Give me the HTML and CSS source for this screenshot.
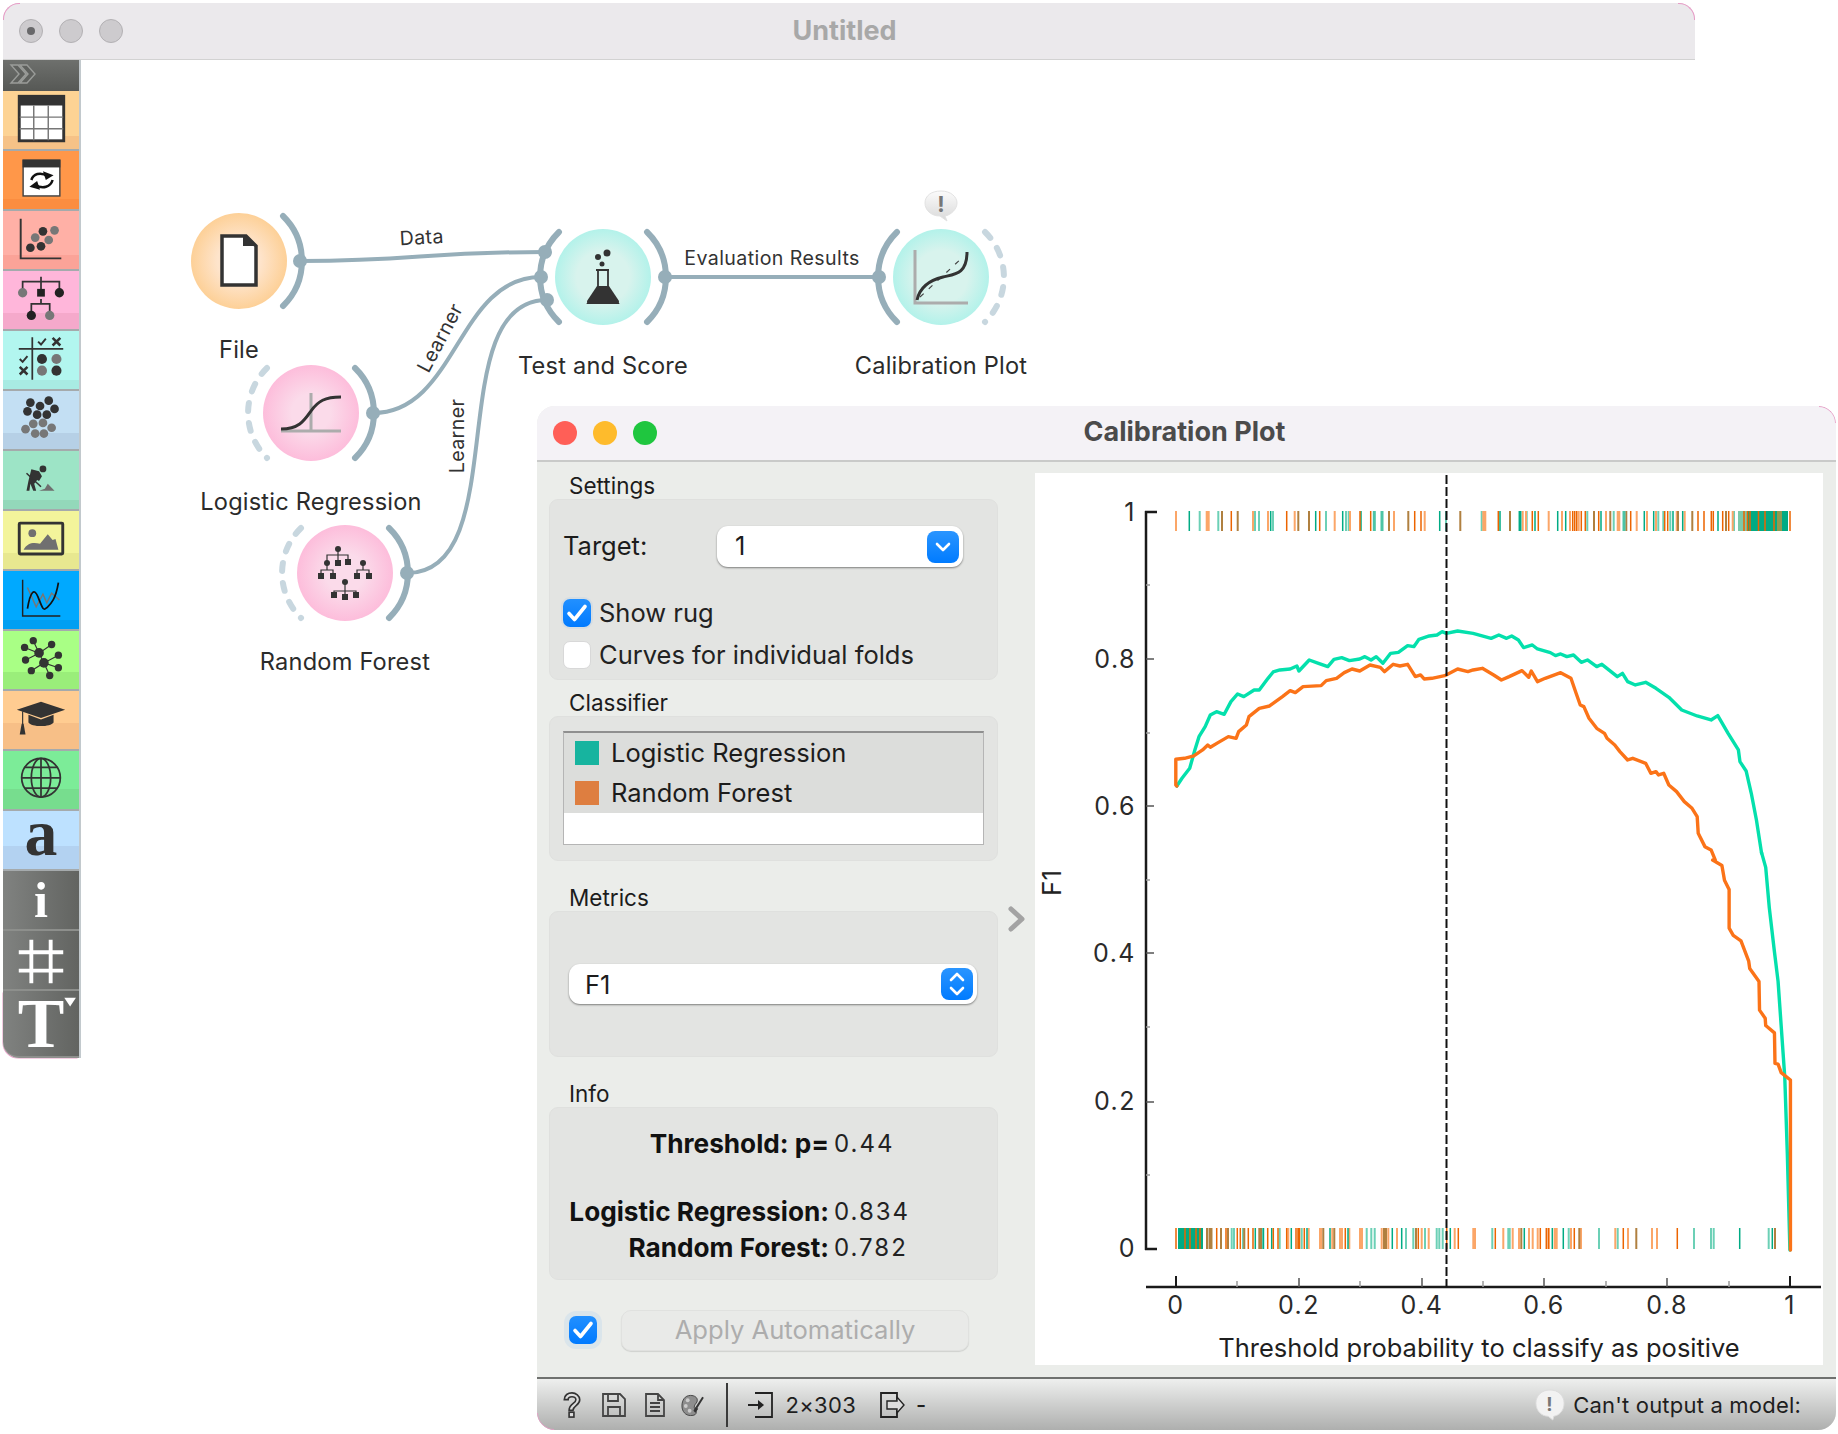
FILE: index.html
```html
<!DOCTYPE html>
<html lang="en">
<head>
<meta charset="utf-8">
<title>Untitled</title>
<link rel="stylesheet" href="styles.css">
</head>
<body>
<div class="desktop">
  <section class="main">
    <header class="main-title">
      <div class="lights">
        <span class="light idle dot"></span><span class="light idle"></span><span class="light idle"></span>
      </div>
      <h1 class="main-name">Untitled</h1>
    </header>
    <div class="main-body">
      <nav class="toolbox">
        <div class="tool-head">
          <svg viewBox="3 0 76 31" class="ico"><path d="M11 5h7l8 9-8 9h-7l8-9zM20 5h7l8 9-8 9h-7l8-9z" fill="#5f615e" stroke="#9a9c99" stroke-width="1.4"/></svg>
        </div>
        <div class="tool c-data"><svg viewBox="3 0 76 60" class="ico">
          <rect x="18.500" y="5.500" width="46" height="46" fill="#fff" stroke="#333" stroke-width="3"/><rect x="18" y="5" width="47" height="10" fill="#333"/>
          <path d="M33.500 15v36M48.500 15v36M19 27h45M19 39h45" stroke="#777" stroke-width="1.500"/></svg></div>
        <div class="tool c-trans"><svg viewBox="3 0 76 60" class="ico">
          <rect x="22.500" y="9.500" width="38" height="37" fill="#fff" stroke="#444" stroke-width="1.500"/><rect x="22" y="9" width="39" height="8" fill="#333"/>
          <path d="M31 30c2-6 9-9 17-4" fill="none" stroke="#111" stroke-width="2.600"/><path d="M43 21l11 4-8 5z" fill="#111"/>
          <path d="M53 30c-2 7-10 10-18 5" fill="none" stroke="#111" stroke-width="2.600"/><path d="M40 40l-11-3 8-6z" fill="#111"/></svg></div>
        <div class="tool c-vis"><svg viewBox="3 0 76 60" class="ico">
          <path d="M20 8v41h42" fill="none" stroke="#333" stroke-width="2"/>
          <g fill="#777"><circle cx="35" cy="27.500" r="4.500"/><circle cx="49" cy="30" r="4.500"/><circle cx="55" cy="20" r="4.500"/></g>
          <g fill="#333"><circle cx="30" cy="38" r="4.500"/><circle cx="41" cy="36.500" r="4.500"/><circle cx="43" cy="21" r="4.500"/></g></svg></div>
        <div class="tool c-model"><svg viewBox="3 0 76 60" class="ico">
          <path d="M41 6v16M22 22v-11h38v11M41 29v5M31 44v-10h19v10" fill="none" stroke="#333" stroke-width="1.800"/>
          <circle cx="22" cy="22.500" r="4.800" fill="#777"/><rect x="37" y="18.500" width="8" height="8" fill="#222"/><circle cx="60" cy="22.500" r="4.800" fill="#222"/>
          <circle cx="31" cy="46" r="4.800" fill="#222"/><circle cx="50" cy="46" r="4.800" fill="#777"/></svg></div>
        <div class="tool c-eval"><svg viewBox="3 0 76 60" class="ico">
          <path d="M32 6.500v44M18 18.500h46" stroke="#333" stroke-width="1.800"/>
          <path d="M38 11l3 3 5-6M19 29l3 3 5-6" fill="none" stroke="#333" stroke-width="2"/>
          <path d="M53 7l8 8M61 7l-8 8M19 37l8 8M27 37l-8 8" stroke="#333" stroke-width="2.600"/>
          <circle cx="42" cy="29" r="5.200" fill="#333"/><circle cx="57" cy="29" r="5.200" fill="#777"/><circle cx="42" cy="41" r="5.200" fill="#777"/><circle cx="57" cy="41" r="5.200" fill="#333"/></svg></div>
        <div class="tool c-unsup"><svg viewBox="3 0 76 60" class="ico">
          <g fill="#333"><circle cx="30" cy="12" r="4.500"/><circle cx="40" cy="15.500" r="4.500"/><circle cx="49" cy="10" r="4.500"/><circle cx="55" cy="18.500" r="4.500"/><circle cx="27" cy="21" r="4.500"/><circle cx="37" cy="24.500" r="4.500"/><circle cx="47" cy="24.500" r="4.500"/></g>
          <g fill="#777"><circle cx="33" cy="34" r="4.500"/><circle cx="43" cy="33" r="4.500"/><circle cx="25" cy="39.500" r="4.500"/><circle cx="52" cy="38" r="4.500"/><circle cx="35" cy="44" r="4.500"/><circle cx="44" cy="44" r="4.500"/></g></svg></div>
        <div class="tool c-pre"><svg viewBox="3 0 76 60" class="ico">
          <circle cx="43" cy="18.500" r="3.500" fill="#333"/>
          <path d="M31 19l8 2 3 5-3 5-2-1-3 4 2 7h-3l-3-7-1 7h-3l2-10z" fill="#333"/>
          <path d="M26 23l15 14" stroke="#333" stroke-width="1.600"/><path d="M39 41l6-2 3-5 7 7z" fill="#6f6f6f"/></svg></div>
        <div class="tool c-img"><svg viewBox="3 0 76 60" class="ico">
          <rect x="18.500" y="12.500" width="45" height="32" rx="1" fill="none" stroke="#333" stroke-width="3"/>
          <circle cx="32" cy="23" r="4" fill="#707070"/><path d="M23 40c4-7 10-8 17-6l8-10 5 6 3-1 3 11z" fill="#707070"/></svg></div>
        <div class="tool c-line"><svg viewBox="3 0 76 60" class="ico">
          <path d="M22 9v37.500h39" fill="none" stroke="#222" stroke-width="1.500"/>
          <path d="M27 17l9 20 7-13 4 9 5-10 8 7" fill="none" stroke="#777" stroke-width="1.500"/>
          <path d="M27 39c3-18 7-22 11-12s5 15 9 11 9-8 12-26" fill="none" stroke="#111" stroke-width="1.800"/></svg></div>
        <div class="tool c-net"><svg viewBox="3 0 76 60" class="ico">
          <path d="M33 10l6 13 13-9M24 17l15 6M25 30l14-7 5 10 15-8M44 33l15 5M31 41l13-8 6 13" fill="none" stroke="#333" stroke-width="1.200"/>
          <g fill="#333"><circle cx="39" cy="22.700" r="5"/><circle cx="44" cy="33" r="5"/><circle cx="33" cy="10" r="3.800"/><circle cx="52" cy="14" r="3.800"/><circle cx="24" cy="17" r="3.800"/><circle cx="59" cy="25" r="3.800"/><circle cx="25" cy="30" r="3.800"/><circle cx="59" cy="38" r="3.800"/><circle cx="31" cy="41" r="3.800"/><circle cx="50" cy="46" r="3.800"/></g></svg></div>
        <div class="tool c-edu"><svg viewBox="3 0 76 60" class="ico">
          <path d="M16 19.500l25-8.500 25 8.500-25 8.500z" fill="#333"/><path d="M28 24.500l13 5 13-5v8c-3 5-23 5-26 0z" fill="#333"/>
          <path d="M22 21v14" stroke="#333" stroke-width="1.200"/><path d="M21 34h2l2 11h-6z" fill="#333"/></svg></div>
        <div class="tool c-web"><svg viewBox="3 0 76 60" class="ico">
          <g fill="none" stroke="#333" stroke-width="1.800"><circle cx="41" cy="27.700" r="20"/><ellipse cx="41" cy="27.700" rx="10" ry="20"/><path d="M41 7.700v40M21 27.700h40M24 17h34M24 38.500h34"/></g></svg></div>
        <div class="tool c-txt"><svg viewBox="3 0 76 60" class="ico"><text x="41" y="45" class="glyph-a">a</text></svg></div>
        <div class="tool c-misc"><svg viewBox="3 0 76 60" class="ico"><text x="41" y="48" class="glyph-i">i</text></svg></div>
        <div class="tool c-misc"><svg viewBox="3 0 76 60" class="ico"><path d="M18 22h46M18 41h46M31 9v45M51 9v45" stroke="#fff" stroke-width="4"/></svg></div>
        <div class="tool c-misc last"><svg viewBox="3 0 76 67" class="ico"><text x="41" y="58" class="glyph-t">T</text><path d="M65 7h12l-6 9z" fill="#fff"/></svg></div>
      </nav>
      <div class="canvas">
        <svg class="scheme" viewBox="81 60 1614 998">
          <g class="wire">
            <path d="M300 261C420 261 420 252 545 252"/>
            <path d="M373 413C457 413 457 277 541 277"/>
            <path d="M407 573C515 573 440 300 547 300"/>
            <path d="M665 277H879"/>
          </g>
          <text class="link-label" transform="translate(422 244) rotate(-3)">Data</text>
          <text class="link-label" transform="translate(772 265)">Evaluation Results</text>
          <text class="link-label" transform="translate(446 341) rotate(-62)">Learner</text>
          <text class="link-label" transform="translate(464 436) rotate(-90)">Learner</text>

          <defs>
            <radialGradient id="gOrange"><stop offset="0.45" stop-color="#fee4cb"/><stop offset="1" stop-color="#fdd097"/></radialGradient>
            <radialGradient id="gPink"><stop offset="0.4" stop-color="#fbdbea"/><stop offset="1" stop-color="#fdbddb"/></radialGradient>
            <radialGradient id="gTeal"><stop offset="0.55" stop-color="#d8f3ed"/><stop offset="1" stop-color="#b3f2ea"/></radialGradient>
            <linearGradient id="gBubble" x1="0" y1="0" x2="0" y2="1"><stop offset="0" stop-color="#fbfbfb"/><stop offset="1" stop-color="#d9d9d9"/></linearGradient>
          </defs>

          <!-- File -->
          <circle cx="239" cy="261" r="48" fill="url(#gOrange)"/>
          <path class="port" d="M283 216A63 63 0 0 1 283 306"/><circle class="anchor" cx="300" cy="261" r="7"/>
          <path d="M222 236h24l10 10v39h-34z" fill="#fff" stroke="#333" stroke-width="3.500"/><path d="M243 235l14 11h-14z" fill="#333"/>
          <text class="node-label" x="239" y="358">File</text>

          <!-- Logistic Regression -->
          <circle cx="311" cy="413" r="48" fill="url(#gPink)"/>
          <path class="port" d="M355 368A63 63 0 0 1 355 458"/><circle class="anchor" cx="373" cy="413" r="7"/>
          <path class="port-off" d="M267 368A63 63 0 0 0 267 458"/>
          <path d="M311 393v38M281 431h60" stroke="#acacac" stroke-width="3" fill="none"/>
          <path d="M281 429c18 0 23-8 30-18s14-14 30-14" fill="none" stroke="#333" stroke-width="3"/>
          <text class="node-label" x="311" y="510">Logistic Regression</text>

          <!-- Random Forest -->
          <circle cx="345" cy="573" r="48" fill="url(#gPink)"/>
          <path class="port" d="M389 528A63 63 0 0 1 389 618"/><circle class="anchor" cx="407" cy="573" r="7"/>
          <path class="port-off" d="M301 528A63 63 0 0 0 301 618"/>
          <g class="rf-lines"><path d="M338 549v6M327 563v-8h21v7M338 555v8M327 563v7M321 576v-6h12v6M363 563v7M357 576v-6h12v6M345 582v9M334 595v-4h22v4M345 591v6"/></g>
          <g class="rf-nodes"><circle cx="338" cy="549" r="3"/><circle cx="327" cy="563" r="3"/><rect x="335" y="560" width="6" height="6"/><rect x="345" y="559" width="6" height="6"/><rect x="318" y="573" width="6" height="6"/><rect x="330" y="573" width="6" height="6"/><circle cx="363" cy="563" r="3"/><rect x="354" y="573" width="6" height="6"/><rect x="366" y="573" width="6" height="6"/><circle cx="345" cy="582" r="3"/><rect x="331" y="592" width="6" height="6"/><rect x="342" y="594" width="6" height="6"/><rect x="353" y="592" width="6" height="6"/></g>
          <text class="node-label" x="345" y="670">Random Forest</text>

          <!-- Test and Score -->
          <circle cx="603" cy="277" r="48" fill="url(#gTeal)"/>
          <path class="port" d="M559 232A63 63 0 0 0 559 322"/><path class="port" d="M647 232A63 63 0 0 1 647 322"/>
          <circle class="anchor" cx="545" cy="252" r="7"/><circle class="anchor" cx="541" cy="277" r="7"/><circle class="anchor" cx="547" cy="300" r="7"/><circle class="anchor" cx="665" cy="277" r="7"/>
          <circle cx="607" cy="253" r="3.500" fill="#333"/><circle cx="598" cy="257" r="3" fill="#333"/><circle cx="602" cy="264" r="2.500" fill="#333"/>
          <path d="M596 270h13M598 270v18l-10 15h30l-10-15v-18" fill="none" stroke="#333" stroke-width="1.800"/>
          <path d="M597 286h12l10 15c0 2-1 3-3 3h-26c-2 0-3-1-3-3z" fill="#333"/>
          <text class="node-label" x="603" y="374">Test and Score</text>

          <!-- Calibration Plot -->
          <circle cx="941" cy="277" r="48" fill="url(#gTeal)"/>
          <path class="port" d="M897 232A63 63 0 0 0 897 322"/><circle class="anchor" cx="879" cy="277" r="7"/>
          <path class="port-off" d="M985 232A63 63 0 0 1 985 322"/>
          <path d="M915 250v53h53" fill="none" stroke="#acacac" stroke-width="3"/>
          <path d="M920 297l43-40" fill="none" stroke="#444" stroke-width="1.200" stroke-dasharray="5 7"/>
          <path d="M917 300c2-9 9-19 26-23 12-3 24-3 24-25" fill="none" stroke="#333" stroke-width="3"/>
          <text class="node-label" x="941" y="374">Calibration Plot</text>
          <path d="M941 191c10 0 16 6 16 12s-6 12-12 13l2 5-7-5c-9 0-15-6-15-13s6-12 16-12z" fill="url(#gBubble)" stroke="#e2e2e2" stroke-width="1"/>
          <text class="bubble-mark" x="941" y="212">!</text>
        </svg>
      </div>
    </div>
  </section>

  <section class="win">
    <header class="win-title">
      <div class="lights">
        <span class="light red"></span><span class="light amber"></span><span class="light green"></span>
      </div>
      <h2 class="win-name">Calibration Plot</h2>
    </header>
    <div class="win-body">
      <aside class="side">
        <div class="group">
          <div class="group-label">Settings</div>
          <div class="box box-settings">
            <div class="target-row">
              <span class="target-label">Target:</span>
              <div class="combo combo-target"><span class="combo-value val-one">1</span>
                <span class="combo-btn"><svg viewBox="0 0 32 32" class="ico"><path d="M10 13l6 6 6-6" fill="none" stroke="#fff" stroke-width="2.600" stroke-linecap="round" stroke-linejoin="round"/></svg></span></div>
            </div>
            <label class="check-row first"><span class="check on"><svg viewBox="0 0 28 28" class="ico"><path d="M6 14.500l5.500 6L22 7.500" fill="none" stroke="#fff" stroke-width="3.600" stroke-linecap="round" stroke-linejoin="round"/></svg></span>Show rug</label>
            <label class="check-row"><span class="check"></span>Curves for individual folds</label>
          </div>
        </div>
        <div class="group g-class">
          <div class="group-label">Classifier</div>
          <div class="box box-class">
            <div class="list">
              <div class="list-item"><span class="swatch teal"></span><span class="item-text">Logistic Regression</span></div>
              <div class="list-item"><span class="swatch orange"></span><span class="item-text">Random Forest</span></div>
            </div>
          </div>
        </div>
        <div class="group g-next">
          <div class="group-label">Metrics</div>
          <div class="box box-metrics">
            <div class="combo combo-metric"><span class="combo-value">F1</span>
              <span class="combo-btn"><svg viewBox="0 0 32 32" class="ico"><path d="M10 12l6-6 6 6M10 20l6 6 6-6" fill="none" stroke="#fff" stroke-width="2.600" stroke-linecap="round" stroke-linejoin="round"/></svg></span></div>
          </div>
        </div>
        <div class="group g-next">
          <div class="group-label">Info</div>
          <div class="box box-info">
            <div class="info-grid">
              <b class="k">Threshold: p=</b><span class="v">0.44</span>
              <span class="info-gap"></span>
              <b class="k">Logistic Regression:</b><span class="v">0.834</span>
              <b class="k">Random Forest:</b><span class="v">0.782</span>
            </div>
          </div>
        </div>
        <div class="apply-row">
          <span class="check on halo"><svg viewBox="0 0 28 28" class="ico"><path d="M6 14.500l5.500 6L22 7.500" fill="none" stroke="#fff" stroke-width="3.600" stroke-linecap="round" stroke-linejoin="round"/></svg></span>
          <button class="apply" disabled>Apply Automatically</button>
        </div>
      </aside>
      <div class="split"><svg viewBox="0 0 18 26" class="chev"><path d="M3 3l11 10L3 23" fill="none" stroke="#a3a3a3" stroke-width="5" stroke-linejoin="round" stroke-linecap="round"/></svg></div>
      <div class="plot">
        <svg class="plot-svg" viewBox="1035 473 788 892">
          <!-- rugs -->
          <g class="rug r-tl"><path d="M1199.700 511v20M1218.300 511v20M1255 511v20M1259 511v20M1273 511v20M1326 511v20M1346 511v20M1348.700 511v20M1446 511v20M1481.700 511v20M1526.700 511v20M1587.300 511v20M1613.700 511v20M1658.300 511v20M1663.300 511v20M1670.300 511v20M1734 511v20"/></g>
          <g class="rug r-ol"><path d="M1176 511v20M1206.700 511v20M1208.700 511v20M1253 511v20M1268 511v20M1294.700 511v20M1334.700 511v20M1350 511v20M1394 511v20M1424.700 511v20M1483.300 511v20M1485.300 511v20M1522.700 511v20M1526 511v20M1548.700 511v20M1562 511v20M1570 511v20M1578.700 511v20M1606 511v20M1617.700 511v20M1619.300 511v20M1636.700 511v20M1647 511v20M1656 511v20M1676.700 511v20M1684.700 511v20M1732.700 511v20"/></g>
          <g class="rug r-t"><path d="M1189.300 511v20M1270.700 511v20M1315.700 511v20M1342.700 511v20M1361 511v20M1439.700 511v20M1500 511v20M1519.300 511v20M1520.700 511v20M1535 511v20M1557.700 511v20M1565.700 511v20M1601 511v20M1644.300 511v20M1653.700 511v20M1673 511v20M1682.700 511v20M1718 511v20"/></g>
          <g class="rug r-o"><path d="M1231.300 511v20M1286.700 511v20M1319.700 511v20M1360 511v20M1370.700 511v20M1414.700 511v20M1421 511v20M1498.300 511v20M1532.300 511v20M1538.300 511v20M1572.700 511v20M1574.700 511v20M1576.700 511v20M1581.300 511v20M1585.300 511v20M1598.700 511v20M1630.700 511v20M1664.700 511v20M1667.700 511v20M1698 511v20M1704 511v20M1711.300 511v20M1713.300 511v20M1722.700 511v20M1728.700 511v20"/></g>
          <g class="rug r-b"><path d="M1222 511v20M1237.700 511v20M1298.300 511v20M1309 511v20M1389 511v20M1408.300 511v20M1460.300 511v20M1510 511v20M1594 511v20M1610.300 511v20M1626.300 511v20M1678 511v20M1692.300 511v20M1726 511v20"/></g>
          <g class="rug r-wide-tl"><path d="M1374.300 511v20M1382 511v20M1624 511v20"/></g>
          <path class="rug-block b-tl" d="M1738 521h14"/><path class="rug-block b-t" d="M1747 521h41"/>
          <path class="rug-block b-br" d="M1777 521h5"/>
          <g class="rug r-o"><path d="M1744 511v20M1747.500 511v20M1750 511v20M1758.500 511v20M1765 511v20M1774 511v20M1790 511v20"/></g>

          <g class="rug r-tl"><path d="M1231.700 1228v21M1234 1228v21M1243 1228v21M1263.300 1228v21M1279.700 1228v21M1301.700 1228v21M1366.700 1228v21M1371.300 1228v21M1374.700 1228v21M1406 1228v21M1413.300 1228v21M1425 1228v21M1436.700 1228v21M1439.300 1228v21M1442.700 1228v21M1492.300 1228v21M1508.300 1228v21M1509.700 1228v21M1568.700 1228v21M1599 1228v21M1617.700 1228v21M1694 1228v21M1711 1228v21M1713.700 1228v21M1768.700 1228v21"/></g>
          <g class="rug r-ol"><path d="M1288.300 1228v21M1308.700 1228v21M1320 1228v21M1321.300 1228v21M1332.300 1228v21M1340 1228v21M1342 1228v21M1349.300 1228v21M1360 1228v21M1362 1228v21M1381.700 1228v21M1388.300 1228v21M1397 1228v21M1421.700 1228v21M1428.700 1228v21M1454.700 1228v21M1473.300 1228v21M1475 1228v21M1503.300 1228v21M1512.700 1228v21M1519 1228v21M1529 1228v21M1532.700 1228v21M1537.700 1228v21M1549 1228v21M1554.700 1228v21M1556.700 1228v21M1571 1228v21M1581 1228v21M1615.300 1228v21M1628 1228v21M1652 1228v21M1657 1228v21"/></g>
          <g class="rug r-t"><path d="M1255.300 1228v21M1263.300 1228v21M1271.700 1228v21M1291.300 1228v21M1307 1228v21M1330 1228v21M1348 1228v21M1392.300 1228v21M1401.700 1228v21M1450.300 1228v21M1524.300 1228v21M1552.300 1228v21M1563.300 1228v21M1739.700 1228v21M1772.300 1228v21"/></g>
          <g class="rug r-o"><path d="M1216.700 1228v21M1226 1228v21M1237.300 1228v21M1240.300 1228v21M1248.300 1228v21M1253 1228v21M1267.700 1228v21M1273.300 1228v21M1278 1228v21M1286.700 1228v21M1296 1228v21M1298 1228v21M1299.500 1228v21M1304.300 1228v21M1345.300 1228v21M1418.300 1228v21M1446.700 1228v21M1458.300 1228v21M1495.300 1228v21M1540.300 1228v21M1546.300 1228v21M1548.300 1228v21M1574.300 1228v21M1623.300 1228v21M1677.300 1228v21"/></g>
          <g class="rug r-b"><path d="M1207 1228v21M1209.500 1228v21M1211.500 1228v21M1221 1228v21M1228 1228v21M1244.300 1228v21M1259.300 1228v21M1261 1228v21M1323.300 1228v21M1334.300 1228v21M1384 1228v21M1386 1228v21M1416 1228v21M1521.300 1228v21M1579.300 1228v21M1636.300 1228v21M1775 1228v21"/></g>
          <path class="rug-block b-t b-low" d="M1178 1238.500h25"/>
          <g class="rug r-o"><path d="M1176 1228v21M1185 1228v21M1190 1228v21M1196 1228v21M1200 1228v21"/></g>

          <!-- axes -->
          <path class="axis" d="M1146 511v739M1145 512h12M1145 1249h12M1146 1287h675"/>
          <path class="tick" d="M1146 659h8M1146 806h8M1146 953h8M1146 1102h8"/>
          <path class="tick-minor" d="M1146 585h4M1146 733h4M1146 880h4M1146 1027h4M1146 1175h4"/>
          <path class="axis-x-major" d="M1176 1287v-11M1790 1287v-11"/>
          <path class="tick" d="M1299 1287v-9M1422 1287v-9M1544 1287v-9M1667 1287v-9"/>
          <path class="tick-minor" d="M1237 1287v-6M1360 1287v-6M1483 1287v-6M1606 1287v-6M1729 1287v-6"/>
          <text class="ty" x="1136" y="521">1</text>
          <text class="ty" x="1136" y="668">0.8</text>
          <text class="ty" x="1136" y="815">0.6</text>
          <text class="ty" x="1136" y="962">0.4</text>
          <text class="ty" x="1136" y="1110">0.2</text>
          <text class="ty" x="1136" y="1257">0</text>
          <text class="tx" x="1176" y="1314">0</text>
          <text class="tx" x="1299" y="1314">0.2</text>
          <text class="tx" x="1422" y="1314">0.4</text>
          <text class="tx" x="1544" y="1314">0.6</text>
          <text class="tx" x="1667" y="1314">0.8</text>
          <text class="tx" x="1790" y="1314">1</text>
          <text class="x-title" x="1479" y="1357">Threshold probability to classify as positive</text>
          <text class="y-title" transform="translate(1061 883) rotate(-90)">F1</text>

          <!-- curves -->
          <g transform="translate(1030 470) scale(.5152 .3333)">
            <polyline class="curve c-teal" points="285,948 295,925 310,895 320,840 328,800 340,770 350,735 362,725 377,733 390,695 403,672 415,680 435,660 445,660 462,625 472,606 485,600 505,597 518,588 522,603 542,570 560,580 578,590 590,568 605,563 620,572 640,567 650,560 662,570 672,560 685,580 700,550 715,547 733,527 745,530 755,508 775,498 790,495 800,485 808,490 830,483 860,490 895,505 910,495 925,505 935,498 948,510 958,533 975,525 985,537 1010,548 1020,557 1030,552 1042,560 1055,555 1070,577 1082,570 1100,590 1110,583 1140,620 1150,610 1160,635 1175,645 1195,637 1215,655 1240,682 1265,720 1285,732 1295,738 1322,750 1335,737 1355,790 1375,840 1378,875 1390,903 1400,970 1410,1050 1420,1150"/>
          </g>
          <g transform="translate(1030 860) scale(.5152 .3679)">
            <polyline class="curve c-teal" points="1420,-20 1428,20 1435,130 1445,250 1452,330 1458,450 1465,590 1470,800 1475,1060"/>
          </g>
          <g transform="translate(1030 470) scale(.5152 .3333)">
            <polyline class="curve c-orange" points="285,948 283,945 283,868 300,865 318,858 335,840 345,825 350,832 365,818 385,800 400,805 405,785 420,765 425,740 445,715 465,708 490,680 505,662 515,668 530,650 565,647 575,632 595,625 610,608 625,597 640,603 660,585 680,592 688,605 705,583 718,588 733,583 748,620 758,615 765,627 780,625 805,617 830,597 850,605 860,600 878,595 900,615 915,630 930,620 955,602 968,622 973,603 985,635 1000,625 1030,608 1050,625 1060,670 1068,705 1075,710 1085,745 1100,775 1115,790 1120,805 1135,825 1145,845 1160,870 1170,865 1195,880 1205,910 1215,905 1220,915 1230,910 1240,945 1255,965 1270,995 1285,1015 1295,1040 1297,1090 1310,1130 1322,1140 1330,1170"/>
          </g>
          <g transform="translate(1030 860) scale(.5152 .3679)">
            <polyline class="curve c-orange" points="1325,0 1343,15 1348,55 1357,80 1357,185 1365,205 1380,220 1395,275 1397,295 1415,330 1416,408 1427,430 1428,450 1445,470 1446,553 1452,555 1458,578 1476,598 1476,1060"/>
          </g>
          <path class="threshold" d="M1446.500 475V1287"/>
        </svg>
      </div>
    </div>
    <footer class="status">
      <div class="status-left">
        <svg viewBox="3 1 20 29" class="st st-help"><path d="M5 10c0-5 4-7 8-7s8 3 8 7c0 6-7 6-7 11h-4c0-7 7-7 7-11 0-2-2-3-4-3s-4 1-4 3z" fill="#ddd" stroke="#333" stroke-width="1.700"/><rect x="10" y="23" width="5" height="5" fill="#ddd" stroke="#333" stroke-width="1.700"/></svg>
        <svg viewBox="0 0 26 26" class="st st-save"><path d="M2 2h17l5 5v17H2zM7 2v7h10V2M7 24V15h12v9" fill="none" stroke="#444" stroke-width="1.800"/></svg>
        <svg viewBox="0 0 22 26" class="st st-doc"><path d="M2 2h12l6 6v16H2zM14 2v6h6M6 11h10M6 15h10M6 19h10" fill="none" stroke="#444" stroke-width="1.800"/></svg>
        <svg viewBox="0 0 24 24" class="st st-pal"><path d="M10 2C4 2 1 7 1 13s4 10 9 10c4 0 6-1 6-4s-3-3-2-6 3-3 3-6-3-5-7-5z" fill="#8e8e8e" stroke="#444" stroke-width="1"/><circle cx="7" cy="7" r="2" fill="#ccc"/><circle cx="5" cy="13" r="2" fill="#ccc"/><circle cx="9" cy="18" r="2" fill="#ccc"/><path d="M23 4l-7 11" stroke="#333" stroke-width="2"/><path d="M15 14l3 2-3 4-2-2z" fill="#333"/></svg>
        <span class="st-sep"></span>
        <svg viewBox="0 0 26 28" class="st st-in"><path d="M8 2h17v24H8M1 14h14" fill="none" stroke="#222" stroke-width="1.800"/><path d="M11 9l6 5-6 5z" fill="#222"/></svg>
        <span class="st-text st-count">2×303</span>
        <svg viewBox="0 0 27 28" class="st st-out"><path d="M18 9V2H2v24h16v-7" fill="none" stroke="#222" stroke-width="1.800"/><path d="M8 10h10V6l7 8-7 8v-4H8z" fill="#ddd" stroke="#222" stroke-width="1.400"/></svg>
        <span class="st-text st-dash">-</span>
      </div>
      <div class="status-right">
        <svg viewBox="0 0 32 34" class="st-warn"><path d="M16 1c9 0 15 6 15 14s-5 13-11 14l-1 4-5-4C7 29 1 23 1 15S7 1 16 1z" fill="#f2f2f2" stroke="#dcdcdc"/><text class="warn-mark" x="15.500" y="23">!</text></svg>
        <span class="st-text">Can't output a model:</span>
      </div>
    </footer>
  </section>
</div>
</body>
</html>
```
FILE: styles.css
```css
* { box-sizing: border-box; }
html, body { margin: 0; padding: 0; background: #fff; }
body { font-family: Inter, "Liberation Sans", sans-serif; color: #1c1c1c; }
.desktop { position: relative; width: 1838px; height: 1434px; padding: 3px 0 0 3px; overflow: hidden; }
.ico { display: block; width: 100%; height: 100%; overflow: visible; }

/* main window */
.main { width: 1692px; }
.main-title { position: relative; height: 57px; display: grid; grid-template-columns: 1fr auto 1fr; align-items: center; background: #ebe9ec; border-bottom: 1px solid #d2d2d2; border-radius: 16px 16px 0 0; padding: 0 25px 1px 16px; }
.main-title::before, .main-title::after, .win::before, .win::after { content: ""; position: absolute; width: 16px; height: 16px; pointer-events: none; }
.main-title::before { left: 0; top: 0; border-top: 1px solid #e79cc6; border-left: 1px solid #e79cc6; border-top-left-radius: 16px; }
.main-title::after { right: 0; top: 0; border-top: 1px solid #e79cc6; border-right: 1px solid #e79cc6; border-top-right-radius: 16px; }
.main-name { margin: 0; font-size: 27px; font-weight: 700; color: #a8a8a8; }
.lights { display: flex; gap: 16px; }
.light { width: 24px; height: 24px; border-radius: 50%; display: flex; align-items: center; justify-content: center; }
.idle { background: #cdcbce; border: 1px solid #b3b1b4; }
.dot::after { content: ""; width: 8px; height: 8px; border-radius: 50%; background: #68686a; }
.red { background: #ff5f57; }
.amber { background: #febb2c; }
.green { background: #1fc63f; }

.main-body { display: flex; height: 998px; }
.toolbox { width: 78px; border-right: 2px solid #c2c9cd; flex: none; }
.tool-head { height: 31px; background: linear-gradient(#6e706d, #565855); }
.tool { height: 60px; border-bottom: 2px solid #a5aaac; }
.tool.last { height: 67px; border-bottom: 2px solid #8d8f8c; border-bottom-left-radius: 16px; box-shadow: -1px 1px 0 -0.5px #e79cc6; }
.c-data { background: linear-gradient(#fdd394 78%, #f6c287 78%); }
.c-trans { background: linear-gradient(#ff9749 82%, #fb8d40 82%); }
.c-vis { background: linear-gradient(#ffb0a6 75%, #fba398 75%); }
.c-model { background: linear-gradient(#ffb6da 72%, #f5a9cb 72%); }
.c-eval { background: linear-gradient(#b2f6ef 85%, #a8ebe3 85%); }
.c-unsup { background: linear-gradient(#c3dff3 72%, #b6d0e6 72%); }
.c-pre { background: linear-gradient(#9de4c6 85%, #93d8ba 85%); }
.c-img { background: linear-gradient(#f3f49b 72%, #e8e890 72%); }
.c-line { background: linear-gradient(#00a9ff 85%, #009ff2 85%); }
.c-net { background: linear-gradient(#a9ff85 70%, #9aee7a 70%); }
.c-edu { background: linear-gradient(#ffcc91 55%, #f7bf87 55%); }
.c-web { background: linear-gradient(#7cec98 65%, #77dd8e 65%); }
.c-txt { background: linear-gradient(#bde1ff 60%, #b3d2f1 60%); }
.c-misc { background: linear-gradient(90deg, #808280, #626461); border-bottom-color: #8d8f8c; }
.glyph-a { font-family: "Liberation Serif", serif; font-weight: 700; font-size: 68px; fill: #333; text-anchor: middle; }
.glyph-i { font-family: "Liberation Serif", serif; font-weight: 700; font-size: 52px; fill: #fff; text-anchor: middle; }
.glyph-t { font-family: "Liberation Serif", serif; font-weight: 700; font-size: 72px; line-height: 1; fill: #fff; text-anchor: middle; }

.canvas { position: relative; flex: 1; }
.scheme { position: absolute; top: 0; left: 0; width: 1614px; height: 998px; overflow: visible; }
.wire path { fill: none; stroke: #96aeb9; stroke-width: 4; }
.port { fill: none; stroke: #96aeb9; stroke-width: 6; stroke-linecap: round; }
.port-off { fill: none; stroke: #c8d7df; stroke-width: 6; stroke-linecap: round; stroke-dasharray: 8 12; }
.anchor { fill: #96aeb9; }
.link-label { font-size: 19.6px; fill: #333; text-anchor: middle; letter-spacing: .4px; }
.node-label { font-size: 23.6px; fill: #2b2b2b; text-anchor: middle; letter-spacing: .2px; }
.rf-lines path { fill: none; stroke: #333; stroke-width: 1.200; }
.rf-nodes { fill: #333; }
.bubble-mark { font-size: 22px; font-weight: 700; fill: #777; text-anchor: middle; }

/* calibration window */
.win { position: absolute; left: 537px; top: 406px; width: 1299px; height: 1024px; display: flex; flex-direction: column; background: #ebedea; border-radius: 18px; overflow: hidden; }
.win::before { right: 0; top: 0; border-top: 1px solid #e79cc6; border-right: 1px solid #e79cc6; border-top-right-radius: 18px; z-index: 2; }
.win::after { left: 0; bottom: 0; border-bottom: 1px solid #e79cc6; border-left: 1px solid #e79cc6; border-bottom-left-radius: 18px; z-index: 2; }
.win-title { height: 56px; flex: none; display: grid; grid-template-columns: 1fr auto 1fr; align-items: center; background: #f4f2f6; border-bottom: 2px solid #c9cac9; padding: 0 20px 0 16px; }
.win-name { margin: 0 0 4px; font-size: 27px; font-weight: 700; color: #4b4b4b; }
.win-body { flex: 1; display: flex; padding-top: 11px; min-height: 0; }
.side { width: 461px; padding-left: 12px; flex: none; }
.group-label { height: 26px; padding-left: 20px; font-size: 22.5px; line-height: 26px; color: #1c1c1c; }
.g-class { margin-top: 10px; }
.g-next { margin-top: 24px; }
.box { background: #e3e4e2; border: 1px solid #dfe0de; border-radius: 9px; }
.box-settings { height: 181px; padding: 26px 0 0 13px; }
.target-row { display: flex; align-items: center; height: 41px; }
.target-label { font-size: 25.5px; width: 154px; padding-bottom: 2px; }
.combo { position: relative; height: 41px; background: #fff; border-radius: 11px; box-shadow: 0 1px 2px rgba(0,0,0,.45); display: flex; align-items: center; justify-content: space-between; font-size: 25.5px; }
.combo-target { width: 246px; }
.val-one { margin-left: 18px; padding-bottom: 2px; }
.combo-btn { width: 32px; height: 32px; margin-right: 4px; border-radius: 8px; background: linear-gradient(#2a95ff, #007bff); }
.combo-metric { width: 408px; margin-left: 19px; height: 40px; }
.combo-metric .combo-value { margin-left: 16px; }
.check-row { display: flex; align-items: center; gap: 8px; font-size: 25.5px; height: 28px; padding-bottom: 2px; margin: 14px 0 0 0; color: #222; }
.check-row .check { margin-top: 2px; }
.check-row.first { margin-top: 32px; }
.check { width: 28px; height: 28px; flex: none; background: #fff; border: 1px solid #d8d8d8; border-radius: 7px; }
.check.on { background: linear-gradient(#2290ff, #007aff); border: none; box-shadow: 0 0 0 2px rgba(0,122,255,.06); }
.check.halo { margin-top: -2px; box-shadow: 0 0 0 5px rgba(0,122,255,.07); }

.box-class { height: 145px; padding: 14px 0 0 13px; }
.list { width: 421px; height: 114px; background: #fff; border: 1px solid #b5b5b5; border-top: 2px solid #8f8f8f; font-size: 25.5px; }
.list-item { height: 40px; background: #dcdddb; display: flex; align-items: center; gap: 11px; padding-left: 11px; }
.item-text { padding-bottom: 2px; margin-left: 1px; }
.swatch { width: 24px; height: 24px; }
.swatch.teal { background: #17b49f; }
.swatch.orange { background: #de7e40; }

.box-metrics { height: 146px; padding-top: 52px; }
.box-info { height: 173px; padding-top: 17px; }
.info-grid { display: grid; grid-template-columns: 279px auto; grid-template-rows: 36px 32px; column-gap: 5px; grid-auto-rows: 36px; align-items: center; font-size: 24px; }
.info-gap { grid-column: 1 / -1; }
.k { text-align: right; font-weight: 700; font-size: 26.2px; color: #111; white-space: nowrap; }
.v { letter-spacing: 2px; color: #222; }
.apply-row { display: flex; align-items: center; gap: 24px; margin: 30px 0 0 20px; }
.apply { width: 348px; height: 41px; background: #e9eae8; border: 1px solid #e0e1df; border-radius: 10px; box-shadow: 0 1px 1px rgba(0,0,0,.12); font: 25.6px Inter, sans-serif; color: #adadad; padding: 0 0 2px; }

.split { width: 37px; flex: none; position: relative; }
.chev { position: absolute; left: 10px; top: 433px; width: 18px; height: 26px; }
.plot { width: 788px; height: 892px; background: #fff; flex: none; }
.plot-svg { display: block; width: 788px; height: 892px; }
.rug { fill: none; }
.rug path { fill: none; }
.r-t path { stroke: #00ab84; stroke-width: 1.500; }
.r-tl path { stroke: #6cd0b6; stroke-width: 2; }
.r-o path { stroke: #ec6400; stroke-width: 1.500; }
.r-ol path { stroke: #fba668; stroke-width: 2; }
.r-b path { stroke: #b08040; stroke-width: 2; }
.r-wide-tl path { stroke: #4cc4a6; stroke-width: 3; }
.rug-block { fill: none; stroke-width: 20; }
.b-low { stroke-width: 21; }
.b-t { stroke: #00ab84; }
.b-tl { stroke: #7cc9a8; }
.b-br { stroke: #8f9a52; }
.axis { fill: none; stroke: #1a1a1a; stroke-width: 2.500; }
.axis-x-major { fill: none; stroke: #1a1a1a; stroke-width: 2; }
.tick { fill: none; stroke: #555; stroke-width: 1.500; }
.tick-minor { fill: none; stroke: #9a9a9a; stroke-width: 1.500; }
.ty { font-size: 25px; text-anchor: end; fill: #2a2a2a; letter-spacing: 1.500px; }
.tx { font-size: 25px; text-anchor: middle; fill: #2a2a2a; letter-spacing: 1.500px; }
.x-title { font-size: 25.5px; text-anchor: middle; fill: #1f1f1f; }
.y-title { font-size: 26px; text-anchor: middle; fill: #222; }
.curve { fill: none; stroke-width: 3.4; vector-effect: non-scaling-stroke; stroke-linejoin: round; stroke-linecap: round; }
.c-teal { stroke: #04e0ac; }
.c-orange { stroke: #fb7318; }
.threshold { fill: none; stroke: #111; stroke-width: 2; stroke-dasharray: 9 3; }

/* status bar */
.status { height: 53px; flex: none; display: flex; justify-content: space-between; align-items: center; border-top: 2px solid #6f716f; background: linear-gradient(#eeefee, #aeafae); padding-left: 25px; padding-right: 35px; }
.status-left { display: flex; align-items: center; }
.st { display: block; flex: none; }
.st-help { width: 20px; height: 28px; margin-right: 19px; }
.st-save { width: 26px; height: 26px; margin-right: 17px; }
.st-doc { width: 22px; height: 26px; margin-right: 15px; }
.st-pal { width: 23px; height: 24px; margin-right: 22px; }
.st-sep { width: 1.500px; height: 44px; background: #3a3a3a; margin-right: 19px; }
.st-in { width: 26px; height: 28px; margin-right: 13px; }
.st-text { font-size: 22px; color: #1e1e1e; letter-spacing: .2px; }
.st-count { letter-spacing: .3px; margin-right: 23px; }
.st-out { width: 27px; height: 28px; margin-right: 10px; }
.st-dash { font-weight: 500; }
.status-right { display: flex; align-items: center; gap: 8px; }
.st-warn { width: 30px; height: 32px; display: block; }
.warn-mark { font-size: 20px; font-weight: 700; fill: #777; text-anchor: middle; }
```
